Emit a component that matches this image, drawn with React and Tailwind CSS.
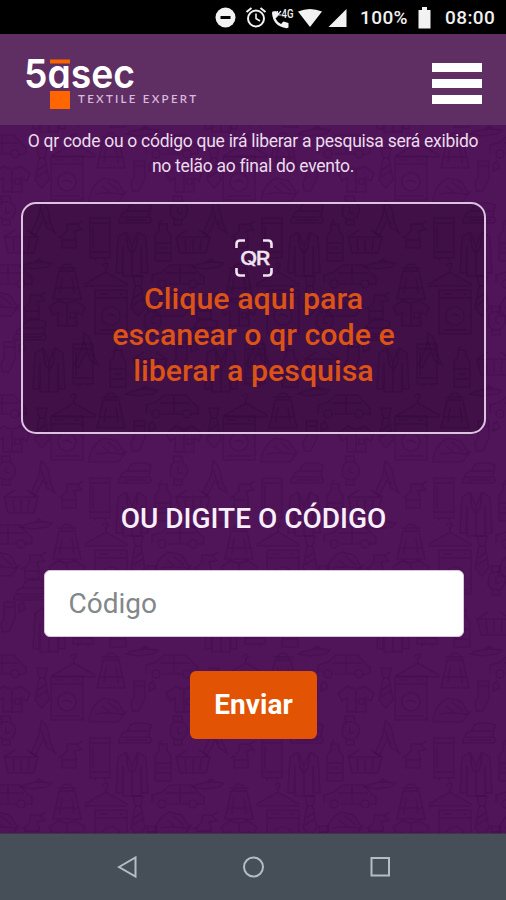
import React, { useState } from "react";

const SHAPES = {
  hanger: "M-21 13L0 1L21 13Q22 16 18 15H-18Q-22 16 -21 13M0 1V-3Q4 -5 1 -8Q-3 -8 -3 -5",
  machine: "M-16 -22H16V22H-16ZM-16 -14H16M-12 -18H-4M8 -18H12M-9 4A9 9 0 1 0 9 4A9 9 0 1 0 -9 4M-5 4Q0 0 5 5M-12 18H12",
  bag: "M-8 -11L-14 17H14L8 -11ZM-6 -11Q-6 -18 0 -18Q6 -18 6 -11M-11 6H11M-5 -4L-7 12M5 -4L7 12M-10 -14H10",
  jacket: "M-6 -22L-14 -17L-16 19H-10L-9 -8V22H9V-8L10 19H16L14 -17L6 -22L0 -8ZM0 -8V22M-6 -22L-4 -6L0 0L4 -6L6 -22",
  wardrobe: "M-10 -20H10V20H-10ZM-10 -15H10M-10 14H10M-7 -12V11M-5 20V23M5 20V23",
  bottle: "M-4 -19H4V-13L8 -7V18H-8V-7L-4 -13ZM-8 0H8M-8 10H8M-4 -19L-1 -23M-4 5H4",
  basket: "M-17 -5H17L13 11H-13ZM-8 -3L-7 9M0 -3V9M8 -3L7 9M-17 -5L-6 -12M17 -5L6 -12",
  car: "M-26 6V-2L-16 -5L-8 -12H14L22 -3L26 0V7H19M-10 7H10M-20 7A4 4 0 1 0 -12 7A4 4 0 1 0 -20 7M11 7A4 4 0 1 0 19 7A4 4 0 1 0 11 7M-12 -4H18M2 -11V6",
  folded: "M-16 9Q-18 4 -13 3H14Q18 5 15 9ZM-14 3Q-14 -2 -8 -3H15M-8 -3L-4 -10Q8 -13 16 -9L14 3M-10 6H12",
  iron: "M-18 11Q-17 -6 -3 -13L10 -10L18 3L11 11ZM-12 3Q0 1 14 3M-5 -5L5 3M1 -9L12 0M14 4L20 0",
  peg: "M-2 -18Q5 -16 7 2L12 14L4 9L1 0L-8 17L-12 14L-4 -4ZM-2 -10L1 0M5 3L1 5",
  tie: "M-5 -20H5L3 -10L7 12L0 20L-7 12L-3 -10ZM-3 -10H3M-4 2L5 -4M-5 9L6 2",
  shirt: "M-8 -12L-18 -5L-14 3L-9 0V14H10V0L15 3L18 -5L8 -12Q0 -6 -8 -12ZM0 -8V14M3 1H8V6H3Z",
  sock: "M-6 -15H5V2L-1 15H-8L-9 7L-6 1ZM-6 -10H5M9 -12L13 -15L16 -8L9 -5Z",
  spray: "M-7 12V0L-2 -5V-12H8L13 -6L5 -5L7 1V12ZM-7 4H7M9 -12L14 -15M-11 2L-7 0",
  watch: "M-7 -6Q0 -13 8 -6Q12 2 5 8Q-3 11 -8 4ZM-4 -9L-5 -15H4L5 -9M-4 8V14H4V8M0 -4V2H4",
  plane: "M-16 3Q-4 -4 16 -1L12 3L-4 5ZM-3 -1L3 -5L8 -2",
};

// name, x, y inside one 172x260 tile
const ITEMS = [
  ["hanger", 106, 10],
  ["machine", 111, 51],
  ["tie", 138, 35],
  ["car", 6, 16],
  ["bag", 67, 21],
  ["plane", 36, 3],
  ["iron", 0, 44],
  ["spray", 32, 46],
  ["folded", 30, 70],
  ["shirt", 67, 51],
  ["watch", 152, 60],
  ["peg", 86, 90],
  ["wardrobe", 83, 103],
  ["jacket", 49, 109],
  ["bottle", 118, 108],
  ["basket", 150, 103],
  ["sock", 10, 96],
  ["plane", 142, 130],
  ["hanger", 74, 141],
  ["bag", 111, 150],
  ["car", 0, 146],
  ["machine", 67, 177],
  ["tie", 42, 167],
  ["iron", 107, 190],
  ["sock", 140, 175],
  ["shirt", 12, 177],
  ["watch", 6, 210],
  ["peg", 43, 218],
  ["folded", 135, 213],
  ["wardrobe", 100, 237],
  ["jacket", 132, 253],
  ["bottle", 163, 242],
  ["basket", 21, 241],
  ["spray", 69, 235],
];

const PatternBackground = () => (
  <svg className="absolute inset-0 w-full h-full" aria-hidden="true">
    <defs>
      <pattern id="laundry" x="0" y="396" width="172" height="260" patternUnits="userSpaceOnUse">
        <g fill="#420748" fillOpacity="0.1" stroke="#3c0544" strokeOpacity="0.34" strokeWidth="1.6">
          {ITEMS.map(([name, x, y], i) =>
            [-172, 0, 172].map((dx) =>
              [-260, 0, 260].map((dy) => (
                <path
                  key={`${i}${dx}${dy}`}
                  d={SHAPES[name]}
                  transform={`translate(${x + dx} ${y + dy})`}
                />
              ))
            )
          )}
        </g>
      </pattern>
    </defs>
    <rect width="100%" height="100%" fill="url(#laundry)" />
  </svg>
);

const StatusBar = () => (
  <div className="h-[34px] bg-black flex items-center text-[#f0f0f0] pl-[215px] pt-[2px]">
    <svg width="132" height="34" viewBox="0 0 132 34" fill="#f2f2f2">
      <circle cx="10.5" cy="16.500" r="10" />
      <path d="M5.500 15h10v3h-10z" fill="#000" />
      <g fill="none" stroke="#f2f2f2">
        <circle cx="41" cy="17.500" r="8" strokeWidth="2" />
        <path d="M41 12.500v5l4 2.500" strokeWidth="1.600" />
        <path d="M31.500 11l5-4M50.500 11l-5-4" strokeWidth="2" />
      </g>
      <path d="M57.500 10.500l4-.5 1.500 5-2.500 2.500q2 4 5.500 5.500l2.500-2.500 5 1.500v4.500q-1.500 1-3 .5Q58 25 57 12z" />
      <path d="M62.500 14l3.500-4M62.500 10v4h4" stroke="#f2f2f2" strokeWidth="1.200" fill="none" />
      <text x="66.500" y="17" fontSize="13" fontWeight="500" textLength="12" lengthAdjust="spacingAndGlyphs" className="font-['Roboto',sans-serif]">4G</text>
      <path d="M83 10.500Q95 5.500 107 10.500L95 26z" />
      <path d="M131.500 8v18h-18z" />
    </svg>
    <span className="ml-[13px] w-[48px] font-['Roboto',sans-serif] font-medium text-[19px] whitespace-nowrap tracking-[0.4px]">100%</span>
    <svg className="ml-[10px]" width="13" height="22" viewBox="0 0 13 22" fill="#f2f2f2">
      <path d="M4 0h5v3h3.500v18.500H.5V3H4z" />
    </svg>
    <span className="ml-[14px] font-['Roboto',sans-serif] font-medium text-[19px] whitespace-nowrap tracking-[0.4px]">08:00</span>
  </div>
);

const Logo = () => (
  <svg className="mt-[9px] overflow-visible" width="180" height="60" viewBox="20 54 180 60">
    <rect x="50" y="59.500" width="20" height="4" fill="#f96400" />
    <rect x="50" y="91" width="20" height="18" fill="#ff6600" />
    <text
      x="24"
      y="88"
      fontSize="40"
      fontWeight="600"
      fill="#fff"
      textLength="111"
      lengthAdjust="spacingAndGlyphs"
      className="font-['Inter',sans-serif] [font-feature-settings:'cv11']"
    >
      5asec
    </text>
    <text x="78" y="103" fontSize="11.500" fontWeight="600" fill="#d9b9dd" textLength="118" className="font-['Lato',sans-serif]">
      TEXTILE EXPERT
    </text>
  </svg>
);

const Header = () => (
  <header className="h-[91px] bg-[#5f2f64] flex items-center justify-between pl-5 pr-6">
    <Logo />
    <button aria-label="Menu" className="flex flex-col gap-[7px] mt-[7px]">
      <span className="w-[50px] h-[9px] bg-white" />
      <span className="w-[50px] h-[9px] bg-white" />
      <span className="w-[50px] h-[9px] bg-white" />
    </button>
  </header>
);

const QrIcon = () => (
  <svg width="40" height="40" viewBox="0 0 40 40" fill="none" stroke="#f0e4f2" strokeWidth="2.600">
    <path d="M2.500 10V6Q2.500 2.500 6 2.500H11M29 2.500H34Q37.500 2.500 37.500 6V10M37.500 30V34Q37.500 37.500 34 37.500H29M11 37.500H6Q2.500 37.500 2.500 34V30" />
    <text x="6" y="26.500" fontSize="18.500" fontWeight="500" fill="#f0e4f2" stroke="#f0e4f2" strokeWidth="0.3" textLength="29" lengthAdjust="spacingAndGlyphs" className="font-['Inter',sans-serif] tracking-[-1.2px]">QR</text>
  </svg>
);

const NavBar = () => (
  <nav className="h-[67px] bg-[#464e57] border-t border-[#3d3547] flex items-center justify-center">
    <svg width="276" height="26" viewBox="0 0 276 26" fill="none" stroke="#b5bcc2" strokeWidth="2">
      <path d="M4 13L20.500 3.500V22.500Z" />
      <circle cx="138.500" cy="13" r="9.500" />
      <rect x="256.500" y="4" width="17.500" height="17.500" />
    </svg>
  </nav>
);

export default function App() {
  const [code, setCode] = useState("");

  return (
    <div className="w-[506px] h-[900px] overflow-hidden flex flex-col font-['Roboto',sans-serif]">
      <StatusBar />
      <Header />
      <main className="relative flex-1 bg-[#501459]">
        <PatternBackground />
        <div className="relative flex flex-col items-center">
          <p className="mt-[4px] text-[17.500px] tracking-[-0.28px] leading-[25px] text-center text-[#eadcec] whitespace-nowrap">
            O qr code ou o código que irá liberar a pesquisa será exibido
            <br />
            no telão ao final do evento.
          </p>
          <button className="ml-px mt-[23px] w-[465px] h-[232px] rounded-[15px] border-2 border-[#dcc3e0] bg-black/20 flex flex-col items-center pt-[34px]">
            <QrIcon />
            <span className="mt-[3px] text-[30.400px] leading-[36px] font-medium text-[#dc5316] whitespace-nowrap">
              Clique aqui para
              <br />
              escanear o qr code e
              <br />
              liberar a pesquisa
            </span>
          </button>
          <h2 className="ml-px mt-[67px] text-[28px] leading-[36px] font-medium text-[#f8effa] whitespace-nowrap">
            OU DIGITE O CÓDIGO
          </h2>
          <input
            className="ml-px mt-[33px] w-[420px] h-[67px] rounded-md border border-[#d9c6dd] bg-white px-6 text-[28px] text-gray-700 placeholder:text-[#82878a] outline-none"
            placeholder="Código"
            value={code}
            onChange={(e) => setCode(e.target.value)}
          />
          <button className="ml-px mt-[34px] w-[127px] h-[68px] rounded-md bg-[#e25303] text-white font-bold text-[28px]">
            Enviar
          </button>
        </div>
      </main>
      <NavBar />
    </div>
  );
}
